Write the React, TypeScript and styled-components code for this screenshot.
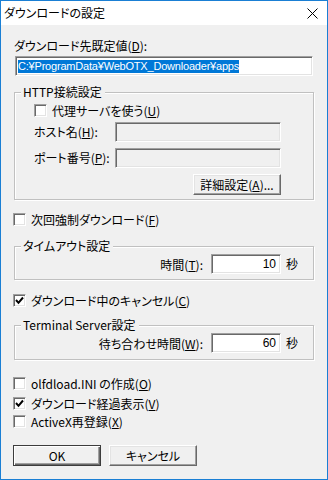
import React from 'react'
import styled, { createGlobalStyle } from 'styled-components'

const GlobalStyle = createGlobalStyle`
  html, body {
    margin: 0;
    padding: 0;
    background: #ffffff;
  }
  body {
    font-family: "Noto Sans CJK JP", "Liberation Sans", sans-serif;
    font-size: 12px;
    color: #000;
    font-feature-settings: "palt";
  }
`

const Window = styled.div`
  width: 328px;
  height: 480px;
  box-sizing: border-box;
  border: 1px solid #1a7fd4;
  background: #f0f0f0;
  display: flex;
  flex-direction: column;
`

const TitleBar = styled.div`
  height: 24px;
  flex: none;
  background: #ffffff;
  display: flex;
  align-items: center;
  justify-content: space-between;
  padding-left: 3px;
`

const TitleText = styled.div`
  font-size: 12px;
  line-height: 14px;
`

const CloseButton = styled.div`
  width: 30px;
  height: 24px;
  display: flex;
  align-items: center;
  justify-content: center;
`

const Body = styled.div`
  display: flex;
  flex-direction: column;
  padding: 0 13px 0 12px;
`

const FieldLabel = styled.div`
  margin: 14px 0 3px 1px;
  line-height: 14px;
`

const Sunken = styled.div<{ $w: number; $disabled?: boolean }>`
  box-sizing: border-box;
  width: ${p => p.$w}px;
  height: 20px;
  border: 1px solid;
  border-color: #a0a0a0 #ffffff #ffffff #a0a0a0;
  box-shadow: inset 1px 1px 0 #696969, inset -1px -1px 0 #e3e3e3;
  background: ${p => (p.$disabled ? '#f0f0f0' : '#ffffff')};
  display: flex;
  align-items: center;
  padding: 0 4px 0 2px;
  line-height: 14px;
`

const PathInput = styled(Sunken)`
  margin-left: 2px;
  font-family: "Liberation Sans", "Noto Sans CJK JP", sans-serif;
  font-size: 11px;
`

const NumberInput = styled(Sunken)`
  justify-content: flex-end;
  margin-left: 8px;
  font-family: "Liberation Sans", sans-serif;
`

const Selection = styled.span`
  background: #0078d7;
  color: #ffffff;
  letter-spacing: -0.2px;
  line-height: 13px;
`

const Group = styled.div<{ $pb: number; $pr: number; $mt: number }>`
  margin: ${p => p.$mt}px 0 0 1px;
  width: 300px;
  box-sizing: border-box;
  padding: 0 ${p => p.$pr}px ${p => p.$pb}px 19px;
  border: 1px solid #c0c0c0;
  box-shadow: inset 1px 1px 0 #ffffff, 1px 1px 0 #ffffff;
  display: flex;
  flex-direction: column;
`

const GroupTitle = styled.div`
  align-self: flex-start;
  margin: -8px 0 0 -13px;
  padding: 0 3px 0 2px;
  line-height: 14px;
  background: #f0f0f0;
`

const FormRow = styled.div<{ $mt: number }>`
  display: flex;
  align-items: center;
  margin-top: ${p => p.$mt}px;
`

const RowLabel = styled.div`
  width: 81px;
  line-height: 14px;
`

const EndRow = styled.div<{ $mt: number }>`
  display: flex;
  align-items: center;
  justify-content: flex-end;
  margin-top: ${p => p.$mt}px;
`

const Unit = styled.div`
  width: 12px;
  margin-left: 5px;
  line-height: 14px;
`

const CheckRow = styled.label<{ $mt: number }>`
  display: flex;
  align-items: center;
  height: 14px;
  margin-top: ${p => p.$mt}px;
`

const Box = styled.span`
  box-sizing: border-box;
  width: 13px;
  height: 13px;
  flex: none;
  border: 1px solid;
  border-color: #a0a0a0 #ffffff #ffffff #a0a0a0;
  box-shadow: inset 1px 1px 0 #696969, inset -1px -1px 0 #e3e3e3;
  background: #ffffff;
  display: flex;
  align-items: center;
  justify-content: center;
  margin-right: 5px;
`

const Button = styled.div<{ $w: number; $default?: boolean }>`
  box-sizing: border-box;
  width: ${p => p.$w}px;
  height: 21px;
  display: flex;
  align-items: center;
  justify-content: center;
  background: #f0f0f0;
  border: 1px solid;
  border-color: ${p => (p.$default ? '#3c3c3c' : '#ffffff #696969 #696969 #ffffff')};
  box-shadow: ${p =>
    p.$default
      ? 'inset 1px 1px 0 #ffffff, inset -1px -1px 0 #696969, inset -2px -2px 0 #a0a0a0'
      : 'inset -1px -1px 0 #a0a0a0, inset 1px 1px 0 #e3e3e3'};
  line-height: 14px;
`

const ButtonBar = styled.div`
  display: flex;
  gap: 8px;
  margin-top: 17px;
`

const Check = ({ checked, children, mt }: { checked?: boolean; children: React.ReactNode; mt: number }) => (
  <CheckRow $mt={mt}>
    <Box>
      {checked && (
        <svg width="9" height="9" viewBox="0 0 9 9">
          <polyline points="1,4 3.5,6.8 8,1.5" fill="none" stroke="#000" strokeWidth="2" />
        </svg>
      )}
    </Box>
    <span>{children}</span>
  </CheckRow>
)

export default function App() {
  return (
    <>
      <GlobalStyle />
      <Window>
        <TitleBar>
          <TitleText>ダウンロードの設定</TitleText>
          <CloseButton>
            <svg width="11" height="11" viewBox="0 0 11 11">
              <path d="M0.5 0.5 L10.5 10.5 M10.5 0.5 L0.5 10.5" stroke="#000" strokeWidth="1" />
            </svg>
          </CloseButton>
        </TitleBar>
        <Body>
          <FieldLabel>
            ダウンロード先既定値(<u>D</u>):
          </FieldLabel>
          <PathInput $w={298}>
            <Selection>C:¥ProgramData¥WebOTX_Downloader¥apps</Selection>
          </PathInput>

          <Group $mt={16} $pb={4} $pr={32}>
            <GroupTitle>HTTP接続設定</GroupTitle>
            <Check mt={4}>
              代理サーバを使う(<u>U</u>)
            </Check>
            <FormRow $mt={5}>
              <RowLabel>
                ホスト名(<u>H</u>):
              </RowLabel>
              <Sunken $w={166} $disabled />
            </FormRow>
            <FormRow $mt={6}>
              <RowLabel>
                ポート番号(<u>P</u>):
              </RowLabel>
              <Sunken $w={166} $disabled />
            </FormRow>
            <EndRow $mt={6}>
              <Button $w={88}>
                詳細設定(<u>A</u>)...
              </Button>
            </EndRow>
          </Group>

          <Check mt={12}>
            次回強制ダウンロード(<u>F</u>)
          </Check>

          <Group $mt={20} $pb={5} $pr={15}>
            <GroupTitle>タイムアウト設定</GroupTitle>
            <EndRow $mt={1}>
              <span>
                時間(<u>T</u>):
              </span>
              <NumberInput $w={70}>10</NumberInput>
              <Unit>秒</Unit>
            </EndRow>
          </Group>

          <Check checked mt={13}>
            ダウンロード中のキャンセル(<u>C</u>)
          </Check>

          <Group $mt={18} $pb={6} $pr={15}>
            <GroupTitle>Terminal Server設定</GroupTitle>
            <EndRow $mt={1}>
              <span>
                待ち合わせ時間(<u>W</u>):
              </span>
              <NumberInput $w={70}>60</NumberInput>
              <Unit>秒</Unit>
            </EndRow>
          </Group>

          <Check mt={16}>
            olfdload.INI の作成(<u>O</u>)
          </Check>
          <Check checked mt={6}>
            ダウンロード経過表示(<u>V</u>)
          </Check>
          <Check mt={4}>
            ActiveX再登録(<u>X</u>)
          </Check>

          <ButtonBar>
            <Button $w={88} $default>
              OK
            </Button>
            <Button $w={88}>キャンセル</Button>
          </ButtonBar>
        </Body>
      </Window>
    </>
  )
}
